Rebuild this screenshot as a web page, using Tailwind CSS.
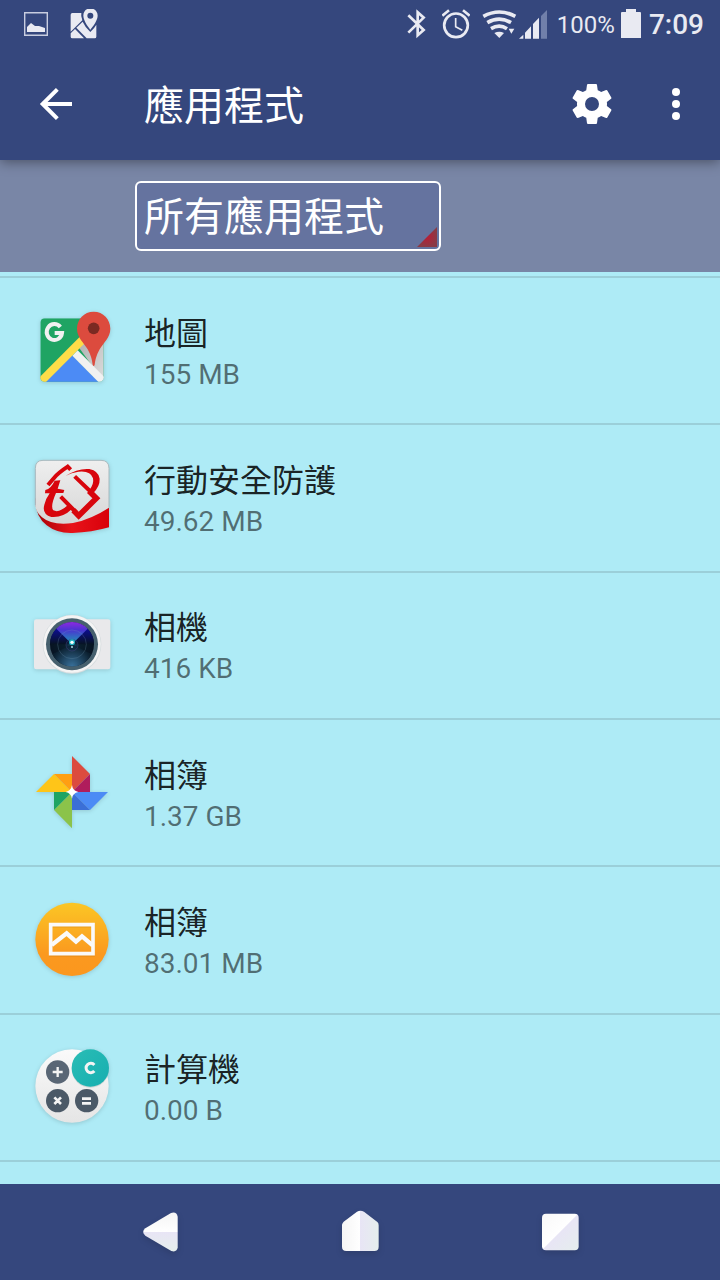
<!DOCTYPE html>
<html lang="zh-Hant">
<head>
<meta charset="utf-8">
<meta name="viewport" content="width=device-width, initial-scale=1">
<title>應用程式</title>
<script src="https://cdn.jsdelivr.net/npm/@tailwindcss/browser@4"></script>
</head>
<body class="flex min-h-screen flex-col bg-[#aeebf6] font-['Roboto','Noto_Sans_CJK_TC',sans-serif]">

<div class="relative z-20 flex h-12 shrink-0 items-center justify-between bg-[#35477d] pr-4 pl-6 text-[#e9eaf2]">
  <div class="flex items-center gap-[22px]">
    <svg class="h-6 w-6" viewBox="0 0 24 24" fill="none" aria-label="圖片"><path d="M.7 .7h22.600v22.600H.7z" stroke="#c8cde0" stroke-width="1.400"/><path d="M3 20v-5l4-4 4 3 4 0 3 1 3 1v4z" fill="currentColor"/></svg>
    <svg class="h-[30px] w-7" viewBox="212 26 84 90" fill="currentColor" aria-label="地圖">
      <path d="M219 38H246Q244 46 249 60L214 94V43Q214 38 219 38z"/>
      <path d="M214 99L227 86L254 114H219Q214 114 214 109z"/>
      <path d="M231 82L250 64Q258 82 273 95Q285 84 291 73V109Q291 114 286 114H262z"/>
      <path fill-rule="evenodd" d="M273 24C260 24 252 34 252 46C252 63 273 88 273 88S295 63 295 46C295 34 286 24 273 24zM273 37a9 9 0 1 1 0 18a9 9 0 1 1 0-18z"/>
    </svg>
  </div>
  <div class="flex items-center">
    <svg class="mr-[15px] h-[30px] w-5" viewBox="48 28 60 90" fill="none" stroke="currentColor" stroke-width="8" aria-label="藍牙"><path d="M52 47L98 91L80 107V38L98 54L52 99"/></svg>
    <svg class="mr-3 h-[30px] w-7" viewBox="153 28 84 90" fill="none" stroke="currentColor" aria-label="鬧鐘"><circle cx="195" cy="77" r="35.500" stroke-width="8"/><path d="M194 55V81L214 92" stroke-width="5"/><path d="M154 48L174 32M216 32L236 48" stroke-width="8"/></svg>
    <svg class="h-[30px] w-[37px]" viewBox="275 28 111 90" fill="none" stroke="currentColor" stroke-width="11" aria-label="Wi-Fi"><path d="M279 50Q327 24 375 50M291 69Q327 48 362 69M302 87Q327 72 350 87"/><path d="M312 100Q327 92 341 100L327 115z" fill="currentColor" stroke="none"/><path d="M355 87H372L363 102z" fill="currentColor" stroke="none"/></svg>
    <svg class="mr-2.5 h-[30px] w-7" viewBox="390 28 84 90" aria-label="訊號"><path fill="currentColor" d="M390 117L403 105V117zM408 99L426 80V117H408zM432 73L450 54V117H432z"/><path fill="#7180aa" d="M456 49L474 31V117H456z"/></svg>
    <span class="mr-1.5 pt-0.5 text-2xl leading-8">100%</span>
    <svg class="mr-2 h-[30px] w-5" viewBox="0 1 20 30" aria-label="電池"><path fill="currentColor" d="M5 1H15V4H19Q20 4 20 5V30H0V5Q0 4 1 4H5z"/></svg>
    <span class="pt-0.5 text-[28px] leading-8 font-medium">7:09</span>
  </div>
</div>

<header class="relative z-10 flex h-28 shrink-0 items-center bg-[#35477d] text-white shadow-[0_2px_12px_rgba(0,0,0,0.4)]">
  <button type="button" aria-label="返回" class="ml-8 flex h-12 w-12 items-center justify-center"><svg class="h-12 w-12" viewBox="96 240 144 144" fill="none" stroke="currentColor" stroke-width="12"><path d="M216 312H130M172 268L128 312L172 356"/></svg></button>
  <h1 class="ml-16 flex-1 pt-1.5 text-[40px] leading-[56px] font-normal">應用程式</h1>
  <button type="button" aria-label="設定" class="mr-9 flex h-12 w-12 items-center justify-center"><svg class="h-12 w-12" viewBox="0 0 24 24" fill="currentColor"><path d="M19.430 12.980c.04-.32.07-.64.07-.98s-.03-.66-.07-.98l2.110-1.650c.19-.15.24-.42.12-.64l-2-3.460c-.12-.22-.39-.3-.61-.22l-2.490 1c-.52-.4-1.080-.73-1.690-.98l-.38-2.650C14.460 2.180 14.250 2 14 2h-4c-.25 0-.46.18-.49.42l-.38 2.650c-.61.25-1.170.59-1.690.98l-2.490-1c-.23-.09-.49 0-.61.22l-2 3.460c-.13.22-.07.49.12.64l2.110 1.650c-.04.32-.07.65-.07.98s.03.66.07.98l-2.110 1.650c-.19.15-.24.42-.12.64l2 3.460c.12.22.39.3.61.22l2.490-1c.52.4 1.080.73 1.690.98l.38 2.650c.03.24.24.42.49.42h4c.25 0 .46-.18.49-.42l.38-2.650c.61-.25 1.170-.59 1.690-.98l2.490 1c.23.09.49 0 .61-.22l2-3.460c.12-.22.07-.49-.12-.64zM12 15.500a3.500 3.500 0 1 1 0-7a3.500 3.500 0 1 1 0 7z"/></svg></button>
  <button type="button" aria-label="更多選項" class="mr-5 flex h-12 w-12 items-center justify-center"><svg class="h-12 w-12" viewBox="0 0 24 24" fill="currentColor"><circle cx="12" cy="6" r="2"/><circle cx="12" cy="12" r="2"/><circle cx="12" cy="18" r="2"/></svg></button>
</header>

<div class="flex h-28 shrink-0 items-center bg-[#7986a6] pl-[135px]">
  <div class="relative">
    <select aria-label="篩選應用程式" class="block h-[70px] w-[306px] appearance-none rounded-md border-2 border-white bg-[#65739f] pt-1 pr-2 pl-[7px] text-[40px] leading-[60px] text-white">
      <option>所有應用程式</option><option>已啟用</option><option>已停用</option>
    </select>
    <svg class="pointer-events-none absolute right-1 bottom-1 h-5 w-5" viewBox="0 0 20 20" aria-hidden="true"><defs><radialGradient id="corner"><stop stop-color="#b81d36"/><stop offset="1" stop-color="#8a3a45"/></radialGradient></defs><path d="M0 20L20 0V20z" fill="url(#corner)"/></svg>
  </div>
</div>

<main class="flex flex-1 flex-col pt-1 pb-[22px]">
<ul class="flex flex-1 flex-col border-t-2 border-[#9bcfd9]">
  <li class="flex min-h-32 flex-1 items-center border-b-2 border-[#9bcfd9] pl-8">
    <svg class="mb-0.5 h-20 w-20 shrink-0 overflow-visible drop-shadow-sm" viewBox="36 30 240 240" aria-hidden="true">
      <defs><clipPath id="mapclip"><rect x="61" y="55" width="190" height="190" rx="13"/></clipPath><linearGradient id="mapshade" x1="0" y1="0" x2="1" y2="1"><stop stop-color="#aaa"/><stop offset="1" stop-color="#ddd"/></linearGradient></defs>
      <g clip-path="url(#mapclip)"><path fill="#1fa463" d="M61 55H251V245H61z"/><path fill="url(#mapshade)" d="M175 140L200 90H251V245z"/><path fill="#4c8bf5" d="M156 166L245 255H66z"/><path fill="#ffdd48" d="M50 240L205 85L215 109L66 258z"/><path fill="#f1f1f1" d="M157 167L173 151L262 240L245 256z"/></g>
      <path d="M121 81A23 24 0 1 0 126 99H104" fill="none" stroke="#f1f1f1" stroke-width="12"/>
      <path fill="#dc4b3e" d="M221 35C192 35 171 58 171 86C171 113 192 128 203 148C214 168 216 181 218 194Q221 202 224 194C226 181 228 168 239 148C250 128 271 113 271 86C271 58 250 35 221 35z"/><circle cx="221" cy="85" r="17.500" fill="#7b2a22"/>
    </svg>
    <div class="ml-8 pt-2"><h2 class="text-[32px] leading-10 font-normal text-black/87">地圖</h2><p class="text-[28px] leading-[42px] text-black/54">155 MB</p></div>
  </li>
  <li class="flex min-h-32 flex-1 items-center border-b-2 border-[#9bcfd9] pl-8">
    <svg class="mb-0.5 h-20 w-20 shrink-0 overflow-visible drop-shadow-sm" viewBox="36 36 240 240" aria-hidden="true">
      <defs><linearGradient id="paper" x1="0" y1="0" x2="0" y2="1"><stop stop-color="#efefef"/><stop offset="1" stop-color="#d6d6d6"/></linearGradient><linearGradient id="redband"><stop stop-color="#a50005"/><stop offset=".5" stop-color="#e8131a"/><stop offset="1" stop-color="#d8000a"/></linearGradient></defs>
      <path fill="url(#redband)" d="M45 160Q46 215 80 241Q112 266 158 264Q215 262 267 247V180z"/>
      <path fill="url(#paper)" d="M69 46H243Q267 46 267 70V188Q213 223 159 234Q95 242 66 217Q46 200 46 180V70Q46 46 69 46z"/>
      <path fill="none" stroke="#a9b9be" stroke-width="3" d="M46 180V70Q46 46 69 46H243Q267 46 267 70V188"/>
      <g fill="none" stroke="#d8050c"><path stroke-width="12" d="M84 120L102 99Q114 84 143 65L152 74"/><path stroke-width="12" d="M164 94L213 141M122 155L170 204"/><path stroke-width="17" d="M207 138L229 160L176 212L160 196"/></g>
      <g fill="#d8050c"><path d="M136 93Q174 69 208 72Q236 78 239 101Q240 124 219 145L207 137Q223 117 219 100Q212 76 175 80Q155 83 136 93z"/><path d="M76 135Q94 130 104 107L121 106L113 131L133 135L130 144L108 144Q90 185 100 196Q117 205 143 181L155 193Q128 219 94 216Q65 207 73 179Q78 160 89 145L75 145z"/></g>
    </svg>
    <div class="ml-8 pt-2"><h2 class="text-[32px] leading-10 font-normal text-black/87">行動安全防護</h2><p class="text-[28px] leading-[42px] text-black/54">49.62 MB</p></div>
  </li>
  <li class="flex min-h-32 flex-1 items-center border-b-2 border-[#9bcfd9] pl-8">
    <svg class="mb-0.5 h-20 w-20 shrink-0 overflow-visible drop-shadow-sm" viewBox="36 13 240 240" aria-hidden="true">
      <defs><radialGradient id="lens"><stop stop-color="#277fa0"/><stop offset=".25" stop-color="#0a202e"/><stop offset="1" stop-color="#071322"/></radialGradient><linearGradient id="flare" x1="0" y1="0" x2="0" y2="1"><stop stop-color="#8c29e0"/><stop offset=".35" stop-color="#4b34d0"/><stop offset="1" stop-color="#18a2b5"/></linearGradient><linearGradient id="lensside" x1="0" y1="0" x2="0" y2="1"><stop stop-color="#0c0d96"/><stop offset="1" stop-color="#071322"/></linearGradient><radialGradient id="lensfloor" gradientUnits="userSpaceOnUse" cx="156" cy="200" r="62"><stop stop-color="#38709a"/><stop offset="1" stop-color="#0b2030"/></radialGradient></defs>
      <rect x="42" y="59" width="229" height="150" rx="7" fill="#e9e9eb"/><circle cx="156" cy="134" r="88" fill="#d6dcde"/><circle cx="156" cy="133" r="86" fill="#f4f4f4"/><circle cx="156" cy="134" r="78" fill="#46606e"/><circle cx="156" cy="134" r="66" fill="url(#lens)"/>
      <path fill="url(#lensside)" d="M156 134H90A66 66 0 0 1 109 87L203 87A66 66 0 0 1 222 134z"/><path fill="url(#flare)" d="M156 134L109 87A66 66 0 0 1 203 87z"/><path fill="url(#lensfloor)" d="M156 134L215 164A66 66 0 0 1 97 164z"/>
      <circle cx="156" cy="134" r="43" fill="none" stroke="#7fa5bd" stroke-opacity=".35" stroke-width="2"/><circle cx="156" cy="136" r="18" fill="#102c48" fill-opacity=".5" stroke="#5b4fa0" stroke-opacity=".5" stroke-width="2"/><circle cx="156" cy="128" r="9" fill="#1fb2c4"/><circle cx="156" cy="128" r="5" fill="#fff"/><circle cx="156" cy="142" r="3" fill="#aed7df"/>
    </svg>
    <div class="ml-8 pt-2"><h2 class="text-[32px] leading-10 font-normal text-black/87">相機</h2><p class="text-[28px] leading-[42px] text-black/54">416 KB</p></div>
  </li>
  <li class="flex min-h-32 flex-1 items-center border-b-2 border-[#9bcfd9] pl-8">
    <svg class="mb-0.5 h-20 w-20 shrink-0 overflow-visible drop-shadow-sm" viewBox="36 36 240 240" aria-hidden="true">
      <path fill="#dc4b3e" d="M156 48L210 102L156 156z"/><path fill="#b01d5c" d="M210 102V156H156z"/><path fill="#4c8bf5" d="M156 156H264L210 210z"/><path fill="#3b6fd6" d="M156 156L210 210H156z"/><path fill="#8bc34a" d="M156 156V265L102 210z"/><path fill="#1fa463" d="M156 156H102V210z"/><path fill="#ffc518" d="M48 156L102 102L156 156z"/><path fill="#ff9f12" d="M102 102H156V156z"/><path fill="#fff" d="M156 135Q158 152 175 156Q158 159 156 176Q153 159 137 156Q153 152 156 135z"/>
    </svg>
    <div class="ml-8 pt-2"><h2 class="text-[32px] leading-10 font-normal text-black/87">相簿</h2><p class="text-[28px] leading-[42px] text-black/54">1.37 GB</p></div>
  </li>
  <li class="flex min-h-32 flex-1 items-center border-b-2 border-[#9bcfd9] pl-8">
    <svg class="mb-0.5 h-20 w-20 shrink-0 overflow-visible drop-shadow-sm" viewBox="36 27 240 240" aria-hidden="true">
      <defs><linearGradient id="album" x1="0" y1="0" x2="0" y2="1"><stop stop-color="#fbc625"/><stop offset=".7" stop-color="#fb991f"/><stop offset="1" stop-color="#fb971e"/></linearGradient></defs>
      <circle cx="156" cy="148" r="110" fill="url(#album)"/><g fill="none" stroke="#d98313" stroke-width="9" opacity=".45" transform="translate(0 4)"><path d="M92 104H220V192H92z"/><path d="M94 164L140 128L168 154L186 138L218 164"/></g><g fill="none" stroke="#fafafa"><path stroke-width="11" d="M92 104H219V191H92z"/><path stroke-width="13" d="M95 165L140 130L168 155L186 139L218 166"/></g>
    </svg>
    <div class="ml-8 pt-2"><h2 class="text-[32px] leading-10 font-normal text-black/87">相簿</h2><p class="text-[28px] leading-[42px] text-black/54">83.01 MB</p></div>
  </li>
  <li class="flex min-h-32 flex-1 items-center border-b-2 border-[#9bcfd9] pl-8">
    <svg class="mb-0.5 h-20 w-20 shrink-0 overflow-visible drop-shadow-sm" viewBox="36 34 240 240" aria-hidden="true">
      <defs><linearGradient id="calc" x1="0" y1="0" x2="0" y2="1"><stop stop-color="#fafafa"/><stop offset="1" stop-color="#e5e5e5"/></linearGradient><linearGradient id="teal" x1="0" y1="0" x2="1" y2="1"><stop stop-color="#2abdb5"/><stop offset="1" stop-color="#16aeb0"/></linearGradient></defs>
      <circle cx="156" cy="154" r="110" fill="url(#calc)"/><circle cx="211" cy="103" r="56" fill="#aab8b8" opacity=".5"/><circle cx="211" cy="100" r="56" fill="url(#teal)"/><g fill="#596675"><circle cx="113" cy="112" r="35"/><circle cx="113" cy="198" r="35" fill="#4b5967"/><circle cx="200" cy="198" r="35" fill="#4b5967"/></g>
      <g fill="none" stroke="#f4f4f4"><path stroke-width="7" d="M98 112H128M113 97V127"/><path stroke-width="8" d="M103 188L123 208M123 188L103 208M186 192H213M186 206H213"/><path stroke-width="9" d="M223 91A14 14 0 1 0 223 109"/></g>
    </svg>
    <div class="ml-8 pt-2"><h2 class="text-[32px] leading-10 font-normal text-black/87">計算機</h2><p class="text-[28px] leading-[42px] text-black/54">0.00 B</p></div>
  </li>
</ul>
</main>

<nav aria-label="系統導覽" class="flex h-24 shrink-0 items-center justify-center gap-[120px] bg-[#35477d]">
  <button type="button" aria-label="返回" class="flex h-20 w-20 items-center justify-center"><svg class="h-12 w-12 drop-shadow-md" viewBox="108 175 144 144"><defs><linearGradient id="navback" x1="0" y1="0" x2="0" y2="1"><stop stop-color="#f5f5f5"/><stop offset=".49" stop-color="#fff"/><stop offset=".5" stop-color="#e8e5f5"/><stop offset="1" stop-color="#e5eeed"/></linearGradient></defs><path fill="url(#navback)" d="M213 190Q230 185 233 201V293Q231 309 214 304L136 258Q123 247 136 236z"/></svg></button>
  <button type="button" aria-label="首頁" class="flex h-20 w-20 items-center justify-center"><svg class="h-12 w-12 drop-shadow-md" viewBox="708 175 144 144"><defs><linearGradient id="navhome"><stop stop-color="#f5f5f5"/><stop offset=".49" stop-color="#fff"/><stop offset=".5" stop-color="#e8e5f5"/><stop offset="1" stop-color="#e5eeed"/></linearGradient></defs><path fill="url(#navhome)" d="M771 186Q781 180 792 186L832 217Q836 220 836 227V291Q836 304 823 304H739Q726 304 726 291V225Q727 220 731 216z"/></svg></button>
  <button type="button" aria-label="最近使用的應用程式" class="flex h-20 w-20 items-center justify-center"><svg class="h-12 w-12 drop-shadow-md" viewBox="1308 175 144 144"><defs><linearGradient id="navrecent" x1="0" y1="0" x2="1" y2="1"><stop stop-color="#f8f8f8"/><stop offset=".49" stop-color="#fff"/><stop offset=".5" stop-color="#e8e5f5"/><stop offset="1" stop-color="#e5eeed"/></linearGradient></defs><rect x="1326" y="192" width="110" height="110" rx="12" fill="url(#navrecent)"/></svg></button>
</nav>
</body>
</html>
